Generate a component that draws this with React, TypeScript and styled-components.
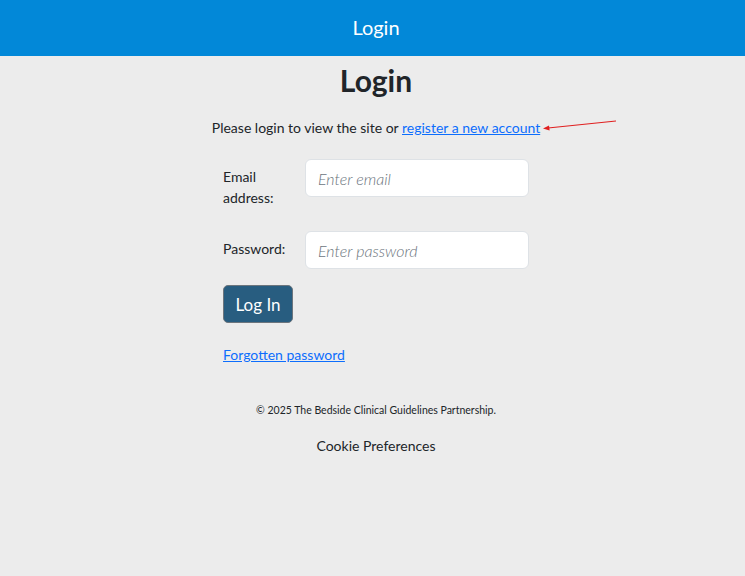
import styled, { createGlobalStyle } from "styled-components"

const GlobalStyle = createGlobalStyle`
    body {
        margin: 0;
        background: #ececec;
        font-family: Lato, "Liberation Sans", sans-serif;
        color: #212529;
    }
`

const TopBar = styled.header`
    height: 56px;
    box-sizing: border-box;
    padding: 0 0 3px 7px;
    background: #0288d8;
    color: #ffffff;
    display: flex;
    align-items: center;
    justify-content: center;
    font-size: 20px;
`

const Page = styled.main`
    padding-left: 7px;
    display: flex;
    flex-direction: column;
    align-items: center;
`

const Title = styled.h1`
    font-size: 30px;
    font-weight: 700;
    margin: 6px 0 0;
    line-height: 36px;
`

const Intro = styled.p`
    position: relative;
    font-size: 14px;
    margin: 20px 0 0;
    line-height: 20px;
`

const TextLink = styled.a`
    color: #0d6efd;
    text-decoration: underline;
    cursor: pointer;
`

const Arrow = styled.svg`
    position: absolute;
    left: calc(100% + 2px);
    top: 0;
`

const Form = styled.form`
    width: 306px;
    margin-top: 21px;
    display: flex;
    flex-direction: column;
`

const Row = styled.div`
    display: flex;
    align-items: flex-start;
    margin-bottom: 16px;
`

const Label = styled.label`
    width: 82px;
    font-size: 14px;
    line-height: 21px;
    padding: 7px 14px 7px 0;
    box-sizing: border-box;
`

const Input = styled.input`
    width: 224px;
    height: 38px;
    box-sizing: border-box;
    border: 1px solid #dee2e6;
    border-radius: 6px;
    background: #ffffff;
    padding: 0 12px;
    font-family: inherit;
    font-size: 16px;
    outline: none;
    &::placeholder {
        color: #6c757d;
        font-style: italic;
        font-weight: 300;
    }
`

const Button = styled.button`
    align-self: flex-start;
    width: 70px;
    height: 38px;
    background: #285d80;
    border: 1px solid #6c757d;
    border-radius: 5px;
    color: #ffffff;
    font-family: inherit;
    font-size: 17px;
`

const Forgot = styled.div`
    margin-top: 22px;
    font-size: 14px;
    line-height: 20px;
`

const Copyright = styled.p`
    font-size: 10.5px;
    margin: 37px 0 0;
    line-height: 16px;
`

const Cookie = styled.p`
    font-size: 14px;
    margin: 18px 0 0;
    line-height: 20px;
`

export default function App() {
    return (
        <>
            <GlobalStyle />
            <TopBar>Login</TopBar>
            <Page>
                <Title>Login</Title>
                <Intro>
                    Please login to view the site or <TextLink>register a new account</TextLink>
                    <Arrow width="76" height="16" viewBox="0 0 76 16">
                        <line x1="74" y1="3" x2="6" y2="10" stroke="#e02020" strokeWidth="1.2" />
                        <polygon points="1,10.5 7,7.5 7.6,12.5" fill="#e02020" />
                    </Arrow>
                </Intro>
                <Form onSubmit={(e) => e.preventDefault()}>
                    <Row>
                        <Label>Email address:</Label>
                        <Input type="email" placeholder="Enter email" />
                    </Row>
                    <Row>
                        <Label>Password:</Label>
                        <Input type="password" placeholder="Enter password" />
                    </Row>
                    <Button>Log In</Button>
                    <Forgot>
                        <TextLink>Forgotten password</TextLink>
                    </Forgot>
                </Form>
                <Copyright>© 2025 The Bedside Clinical Guidelines Partnership.</Copyright>
                <Cookie>Cookie Preferences</Cookie>
            </Page>
        </>
    )
}
